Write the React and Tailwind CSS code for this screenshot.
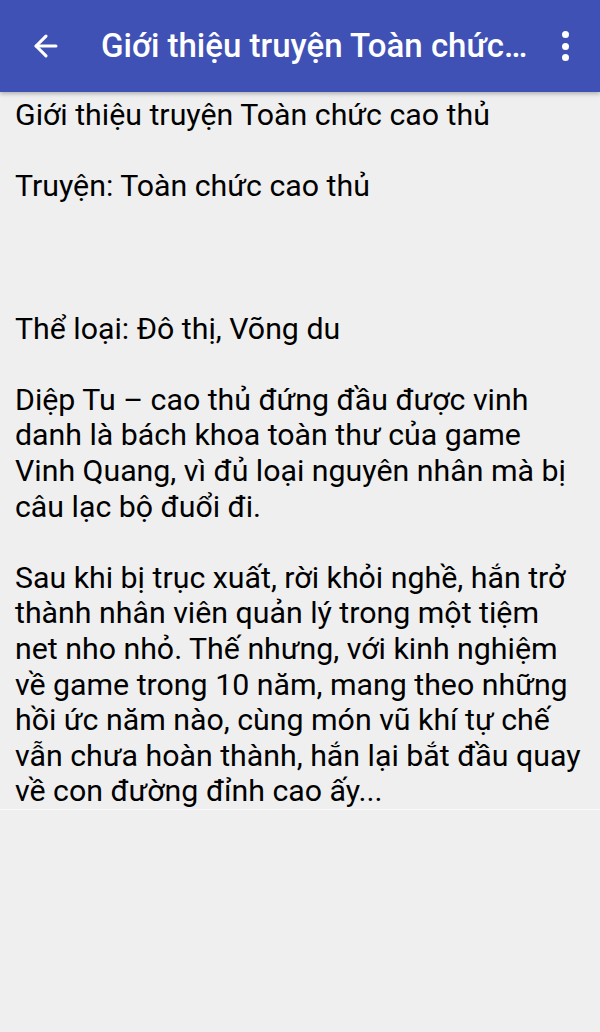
import { ArrowLeft } from 'lucide-react'

const lines = [
  'Giới thiệu truyện Toàn chức cao thủ',
  '',
  'Truyện: Toàn chức cao thủ',
  '',
  '',
  '',
  'Thể loại: Đô thị, Võng du',
  '',
  'Diệp Tu – cao thủ đứng đầu được vinh danh là bách khoa toàn thư của game Vinh Quang, vì đủ loại nguyên nhân mà bị câu lạc bộ đuổi đi.',
  '',
  'Sau khi bị trục xuất, rời khỏi nghề, hắn trở thành nhân viên quản lý trong một tiệm net nho nhỏ. Thế nhưng, với kinh nghiệm về game trong 10 năm, mang theo những hồi ức năm nào, cùng món vũ khí tự chế vẫn chưa hoàn thành, hắn lại bắt đầu quay về con đường đỉnh cao ấy...',
]

export default function App() {
  return (
    <div className="w-[600px] h-[1032px] bg-[#efefef] flex flex-col font-['Roboto',sans-serif]">
      {/* App bar */}
      <div className="h-[92px] bg-[#3f51b5] flex items-center text-white shadow-[0_2px_4px_rgba(0,0,0,0.25)] z-10 shrink-0">
        <div className="w-[94px] flex items-center justify-center shrink-0">
          <ArrowLeft size={34} strokeWidth={2.2} className="ml-[-2px]" />
        </div>
        <h1 className="flex-1 min-w-0 truncate text-[33px] font-medium ml-[7px]">
          Giới thiệu truyện Toàn chức cao thủ
        </h1>
        <div className="w-[72px] flex flex-col items-center justify-center gap-[4.5px] shrink-0 pl-[2px]">
          <span className="w-[7px] h-[7px] rounded-full bg-white" />
          <span className="w-[7px] h-[7px] rounded-full bg-white" />
          <span className="w-[7px] h-[7px] rounded-full bg-white" />
        </div>
      </div>

      {/* Body text */}
      <div className="px-[15px] pt-[5px] border-b border-[#fafafa] text-[30.3px] leading-[35.6px] text-black">
        {lines.map((l, i) => (
          <p key={i}>{l || '\u00a0'}</p>
        ))}
      </div>
    </div>
  )
}
